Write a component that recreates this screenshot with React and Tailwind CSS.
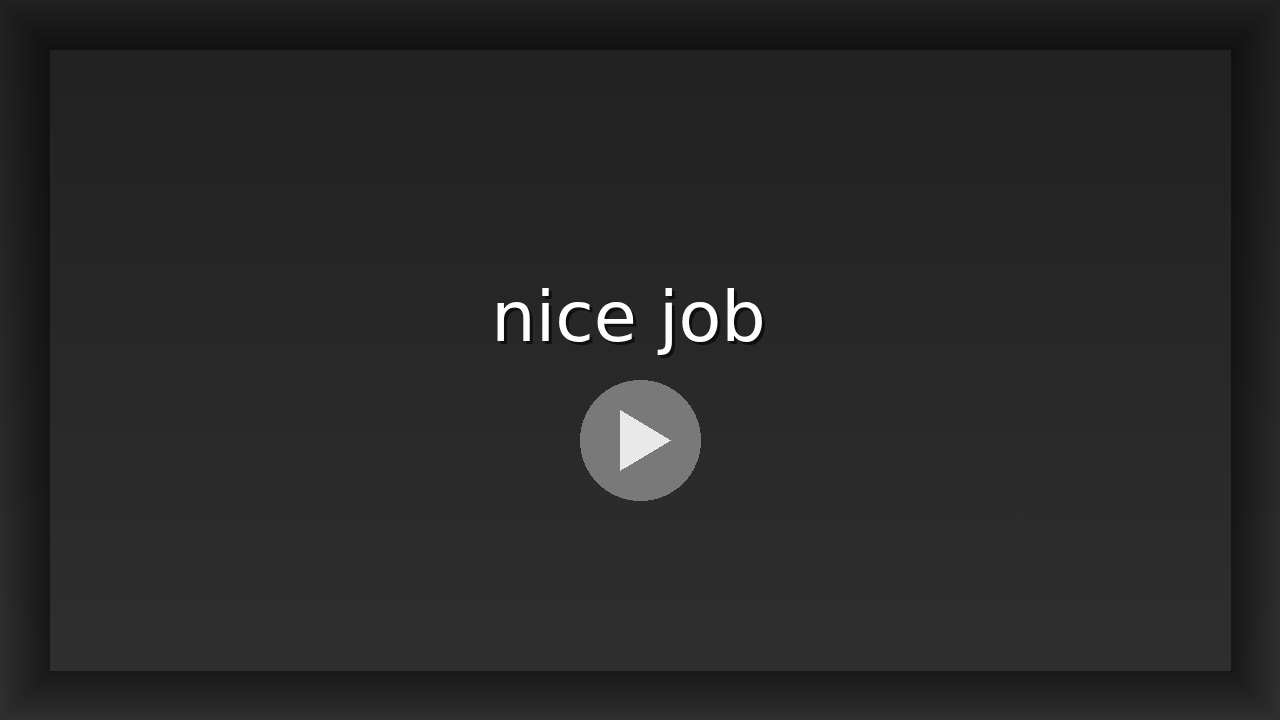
export default function App() {
  return (
    <main className="relative flex min-h-screen flex-col bg-[linear-gradient(to_bottom,#212121_24px,#2f2f2f_calc(100%-24px))] p-[50px] pb-[49px] pr-[49px]">
      <svg className="absolute inset-0 size-full" viewBox="0 0 1280 720" preserveAspectRatio="none" aria-hidden="true">
        <defs>
          <linearGradient id="top" x1="0" y1="0" x2="0" y2="1"><stop stopOpacity="0" /><stop offset="1" stopOpacity=".5" /></linearGradient>
          <linearGradient id="bottom" x1="0" y1="1" x2="0" y2="0"><stop stopOpacity="0" /><stop offset="1" stopOpacity=".5" /></linearGradient>
          <linearGradient id="left"><stop stopOpacity="0" /><stop offset="1" stopOpacity=".5" /></linearGradient>
          <linearGradient id="right" x1="1" x2="0"><stop stopOpacity="0" /><stop offset="1" stopOpacity=".5" /></linearGradient>
        </defs>
        <g shapeRendering="crispEdges">
          <path d="M0 0H1280L1231 50H50Z" fill="url(#top)" />
          <path d="M0 720H1280L1231 671H50Z" fill="url(#bottom)" />
          <path d="M0 0L50 50V671L0 720Z" fill="url(#left)" />
          <path d="M1280 0L1231 50V671L1280 720Z" fill="url(#right)" />
        </g>
      </svg>
      <section className="relative flex grow flex-col items-center pt-[227px]">
        <h1 className="mr-6 font-['DejaVu_Sans',sans-serif] text-[70px] leading-[80px] text-white [text-shadow:3px_3px_0_#0f0f0f]">nice job</h1>
        <button type="button" aria-label="Play" className="mt-[23px] size-[121px]">
          <svg viewBox="0 0 121 121" className="size-full" shapeRendering="crispEdges">
            <circle cx="60.5" cy="60.5" r="60.5" fill="#797979" />
            <path d="M40 30L91 60.5L40 91Z" fill="#e9e9e9" />
          </svg>
        </button>
      </section>
    </main>
  );
}
